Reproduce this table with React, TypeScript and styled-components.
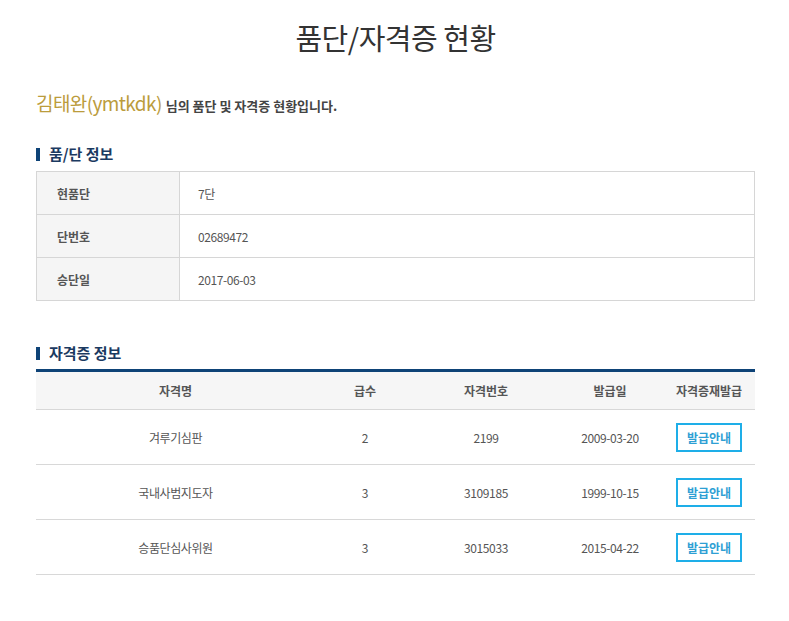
import styled, { createGlobalStyle } from "styled-components";

const GlobalStyle = createGlobalStyle`
  body {
    margin: 0;
    background: #fff;
    font-family: "Noto Sans CJK KR", "Noto Sans", sans-serif;
    color: #555;
  }
`;

const Page = styled.div`
  width: 719px;
  padding: 16px 0 40px;
  margin-left: 36px;
`;

const Title = styled.h1`
  margin: 0;
  text-align: center;
  font-size: 29px;
  font-weight: 400;
  color: #333;
  line-height: 42px;
  letter-spacing: -0.5px;
`;

const Greeting = styled.p`
  margin: 32px 0 0;
  font-size: 13px;
  font-weight: 700;
  color: #444;
  line-height: 26px;
`;

const Name = styled.span`
  font-size: 19px;
  font-weight: 400;
  color: #bb9c3c;
  letter-spacing: -0.6px;
  margin-right: 4px;
`;

const SectionTitle = styled.h2<{ $top: number }>`
  display: flex;
  align-items: center;
  gap: 9px;
  margin: ${(p) => p.$top}px 0 0;
  font-size: 15px;
  font-weight: 700;
  color: #1b3a61;
  line-height: 20px;

  &::before {
    content: "";
    width: 4px;
    height: 13px;
    background: #0e4377;
  }
`;

const InfoTable = styled.table`
  width: 100%;
  margin-top: 7px;
  border-collapse: collapse;
  font-size: 12px;
`;

const InfoLabel = styled.th`
  width: 143px;
  height: 43px;
  padding: 0 20px;
  text-align: left;
  font-weight: 700;
  color: #555;
  background: #f5f5f5;
  border: 1px solid #d6d6d6;
  box-sizing: border-box;
`;

const InfoValue = styled.td`
  padding: 0 18px;
  color: #555;
  border: 1px solid #d6d6d6;
  letter-spacing: -0.4px;
`;

const CertTable = styled.table`
  width: 100%;
  margin-top: 6px;
  border-collapse: collapse;
  border-top: 3px solid #0e4377;
  font-size: 12px;
  table-layout: fixed;
`;

const HeadCell = styled.th<{ $w: number }>`
  width: ${(p) => p.$w}px;
  height: 37px;
  background: #f6f6f6;
  border-bottom: 1px solid #d8d8d8;
  font-weight: 700;
  color: #555;
  text-align: center;
  padding: 0;
`;

const Cell = styled.td`
  height: 54px;
  text-align: center;
  color: #555;
  border-bottom: 1px solid #d8d8d8;
  letter-spacing: -0.4px;
  padding: 0;
`;

const IssueButton = styled.button`
  width: 66px;
  height: 29px;
  padding: 0;
  border: 2px solid #1eaee8;
  background: #fff;
  color: #2e9fd4;
  font-family: inherit;
  font-size: 12px;
  font-weight: 700;
  cursor: pointer;
`;

const info = [
  { label: "현품단", value: "7단" },
  { label: "단번호", value: "02689472" },
  { label: "승단일", value: "2017-06-03" },
];

const columns = [
  { title: "자격명", w: 279 },
  { title: "급수", w: 100 },
  { title: "자격번호", w: 142 },
  { title: "발급일", w: 106 },
  { title: "자격증재발급", w: 92 },
];

const certs = [
  { name: "겨루기심판", grade: "2", no: "2199", date: "2009-03-20" },
  { name: "국내사범지도자", grade: "3", no: "3109185", date: "1999-10-15" },
  { name: "승품단심사위원", grade: "3", no: "3015033", date: "2015-04-22" },
];

export default function App() {
  return (
    <>
      <GlobalStyle />
      <Page>
        <Title>품단/자격증 현황</Title>
        <Greeting>
          <Name>김태완(ymtkdk)</Name>님의 품단 및 자격증 현황입니다.
        </Greeting>

        <SectionTitle $top={25}>품/단 정보</SectionTitle>
        <InfoTable>
          <tbody>
            {info.map((row) => (
              <tr key={row.label}>
                <InfoLabel>{row.label}</InfoLabel>
                <InfoValue>{row.value}</InfoValue>
              </tr>
            ))}
          </tbody>
        </InfoTable>

        <SectionTitle $top={42}>자격증 정보</SectionTitle>
        <CertTable>
          <thead>
            <tr>
              {columns.map((c) => (
                <HeadCell key={c.title} $w={c.w}>
                  {c.title}
                </HeadCell>
              ))}
            </tr>
          </thead>
          <tbody>
            {certs.map((c) => (
              <tr key={c.no}>
                <Cell>{c.name}</Cell>
                <Cell>{c.grade}</Cell>
                <Cell>{c.no}</Cell>
                <Cell>{c.date}</Cell>
                <Cell>
                  <IssueButton>발급안내</IssueButton>
                </Cell>
              </tr>
            ))}
          </tbody>
        </CertTable>
      </Page>
    </>
  );
}
